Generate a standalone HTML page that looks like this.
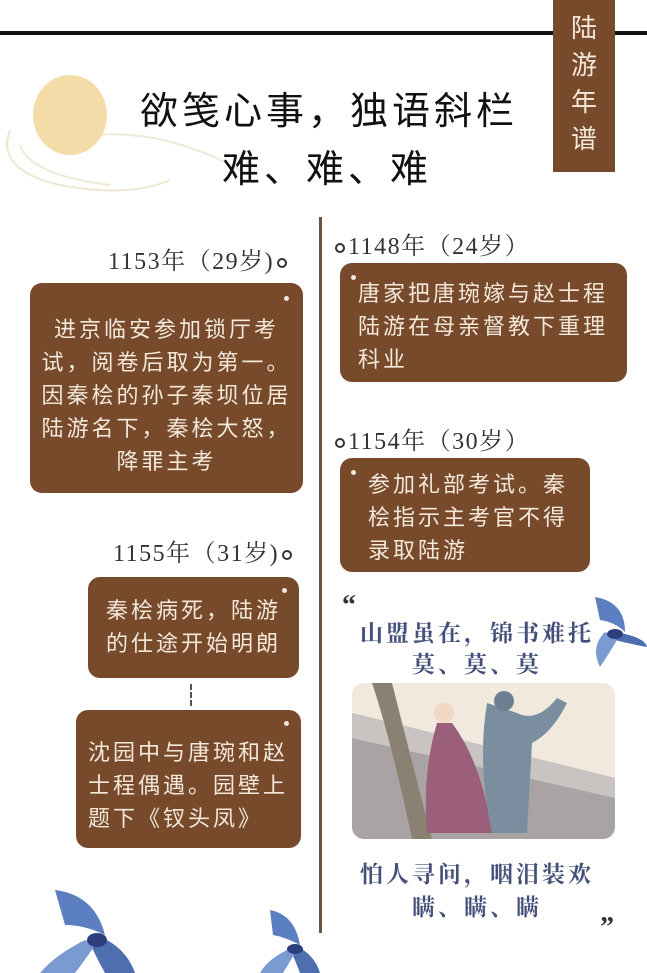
<!DOCTYPE html>
<html><head><meta charset="utf-8"><style>
*{margin:0;padding:0;box-sizing:border-box}
body{width:647px;height:973px;background:#fff;position:relative;overflow:hidden;font-family:"Liberation Serif","Noto Serif CJK SC",serif}
.a{position:absolute}
.box{position:absolute;background:#774a2c;border-radius:12px;color:#f4e8da;font-family:"Liberation Sans","Noto Sans CJK SC",sans-serif;font-size:22px;line-height:33px;letter-spacing:3px}
.dot{position:absolute;width:5px;height:5px;border-radius:50%;background:#f4e8da}
.yr{position:absolute;font-size:24px;color:#333;white-space:nowrap;letter-spacing:1.5px}
.o{display:inline-block;width:10px;height:10px;border:2px solid #333;border-radius:50%;vertical-align:middle;margin:0 3px}
.q{color:#44507a;font-family:"Liberation Serif","Noto Serif CJK SC",serif;font-size:23px;font-weight:bold;text-align:center;letter-spacing:3px;position:absolute}
</style></head><body>
<div class="a" style="left:0;top:31px;width:647px;height:4px;background:#111"></div>
<div class="a" style="left:553px;top:0;width:62px;height:172px;background:#774a2c;color:#f4e8da;font-family:'Liberation Sans','Noto Sans CJK SC',sans-serif;font-size:26px;line-height:37px;text-align:center;padding-top:10px">陆<br>游<br>年<br>谱</div>
<svg class="a" style="left:0;top:70px" width="260" height="160">
<path d="M10 60 Q-5 100 60 115 Q130 128 170 110" stroke="#efe6d2" fill="none" stroke-width="2"/>
<path d="M20 75 Q30 105 110 115" stroke="#f1e9d8" fill="none" stroke-width="2"/>
<path d="M60 70 Q150 50 240 100" stroke="#f1e9d8" fill="none" stroke-width="2"/>
<ellipse cx="70" cy="45" rx="37" ry="40" fill="#f3dca8"/>
</svg>
<div class="a" style="left:140px;top:80px;font-family:'Liberation Sans','Noto Sans CJK SC',sans-serif;font-size:38px;color:#111;letter-spacing:4px;white-space:nowrap">欲笺心事，独语斜栏</div>
<div class="a" style="left:222px;top:138px;font-family:'Liberation Sans','Noto Sans CJK SC',sans-serif;font-size:38px;color:#111;letter-spacing:4px;white-space:nowrap">难、难、难</div>
<div class="a" style="left:319px;top:217px;width:3px;height:716px;background:#6b5446"></div>

<div class="yr" style="left:108px;top:241px">1153年（29岁)<span class="o"></span></div>
<div class="box" style="left:30px;top:283px;width:273px;height:210px;text-align:center;padding-top:30px">进京临安参加锁厅考<br>试，阅卷后取为第一。<br>因秦桧的孙子秦坝位居<br>陆游名下，秦桧大怒，<br>降罪主考<div class="dot" style="right:14px;top:13px"></div></div>

<div class="yr" style="left:332px;top:226px"><span class="o"></span>1148年（24岁）</div>
<div class="box" style="left:340px;top:263px;width:287px;height:119px;padding:14px 0 0 18px">唐家把唐琬嫁与赵士程<br>陆游在母亲督教下重理<br>科业<div class="dot" style="left:11px;top:12px"></div></div>

<div class="yr" style="left:332px;top:421px"><span class="o"></span>1154年（30岁）</div>
<div class="box" style="left:340px;top:458px;width:250px;height:114px;padding:10px 0 0 28px">参加礼部考试。秦<br>桧指示主考官不得<br>录取陆游<div class="dot" style="left:11px;top:12px"></div></div>

<div class="yr" style="left:113px;top:533px">1155年（31岁)<span class="o"></span></div>
<div class="box" style="left:88px;top:577px;width:211px;height:101px;text-align:center;padding-top:17px">秦桧病死，陆游<br>的仕途开始明朗<div class="dot" style="right:12px;top:11px"></div></div>
<div class="a" style="left:190px;top:684px;width:2px;height:22px;border-left:2px dashed #555"></div>
<div class="box" style="left:76px;top:710px;width:225px;height:138px;padding:26px 0 0 12px">沈园中与唐琬和赵<br>士程偶遇。园壁上<br>题下《钗头凤》<div class="dot" style="right:12px;top:11px"></div></div>

<div class="a" style="left:342px;top:590px;font-size:28px;color:#333;font-weight:bold">“</div>
<div class="q" style="left:352px;top:618px;width:250px;line-height:31px">山盟虽在，锦书难托<br>莫、莫、莫</div>
<svg class="a" style="left:585px;top:592px" width="62" height="80">
<path d="M10 5 Q40 10 40 40 Q30 30 15 28Z" fill="#5b7fc0"/>
<path d="M30 40 Q60 45 62 55 Q45 52 30 48Z" fill="#4d6fb0"/>
<path d="M20 40 Q5 55 15 75 Q25 60 32 48Z" fill="#7a9ad2"/>
<ellipse cx="30" cy="42" rx="8" ry="5" fill="#2c3f7a"/>
</svg>
<div class="a" style="left:352px;top:683px;width:263px;height:156px;border-radius:12px;overflow:hidden;background:#f1e9de">
<svg width="263" height="156">
<polygon points="0,30 263,95 263,156 0,156" fill="#a9a3a6"/>
<polygon points="0,30 263,95 263,115 0,55" fill="#c9c4c2"/>
<path d="M20 0 Q40 60 60 156 L80 156 Q55 60 40 0Z" fill="#8a8172"/>
<path d="M85 40 Q70 90 75 150 L140 150 Q130 80 100 40Z" fill="#9b5f7a"/>
<circle cx="92" cy="30" r="10" fill="#f1d8c4"/>
<path d="M135 20 Q125 80 140 150 L175 150 L180 60 Q200 50 215 20 L205 15 Q185 40 165 30 Z" fill="#7a8ea0"/>
<circle cx="152" cy="18" r="10" fill="#6f7f92"/>
</svg></div>
<div class="q" style="left:352px;top:858px;width:250px;line-height:33px">怕人寻问，咽泪装欢<br>瞒、瞒、瞒</div>
<div class="a" style="left:600px;top:912px;font-size:28px;color:#333;font-weight:bold">”</div>

<svg class="a" style="left:35px;top:885px" width="100" height="88">
<path d="M20 5 Q60 10 70 50 Q50 40 30 40Z" fill="#5b7fc0"/>
<path d="M60 50 Q90 60 100 88 L70 88 Q60 70 55 58Z" fill="#4d6fb0"/>
<path d="M50 55 Q20 70 5 88 L40 88 Q50 75 60 60Z" fill="#7a9ad2"/>
<ellipse cx="62" cy="55" rx="10" ry="7" fill="#2c3f7a"/>
</svg>
<svg class="a" style="left:255px;top:905px" width="65" height="68">
<path d="M15 5 Q40 10 45 40 Q30 32 18 30Z" fill="#5b7fc0"/>
<path d="M40 40 Q60 50 65 68 L45 68 Q40 55 36 46Z" fill="#4d6fb0"/>
<path d="M32 45 Q12 55 5 68 L28 68 Q34 58 40 48Z" fill="#7a9ad2"/>
<ellipse cx="40" cy="44" rx="8" ry="5" fill="#2c3f7a"/>
</svg>
</body></html>
